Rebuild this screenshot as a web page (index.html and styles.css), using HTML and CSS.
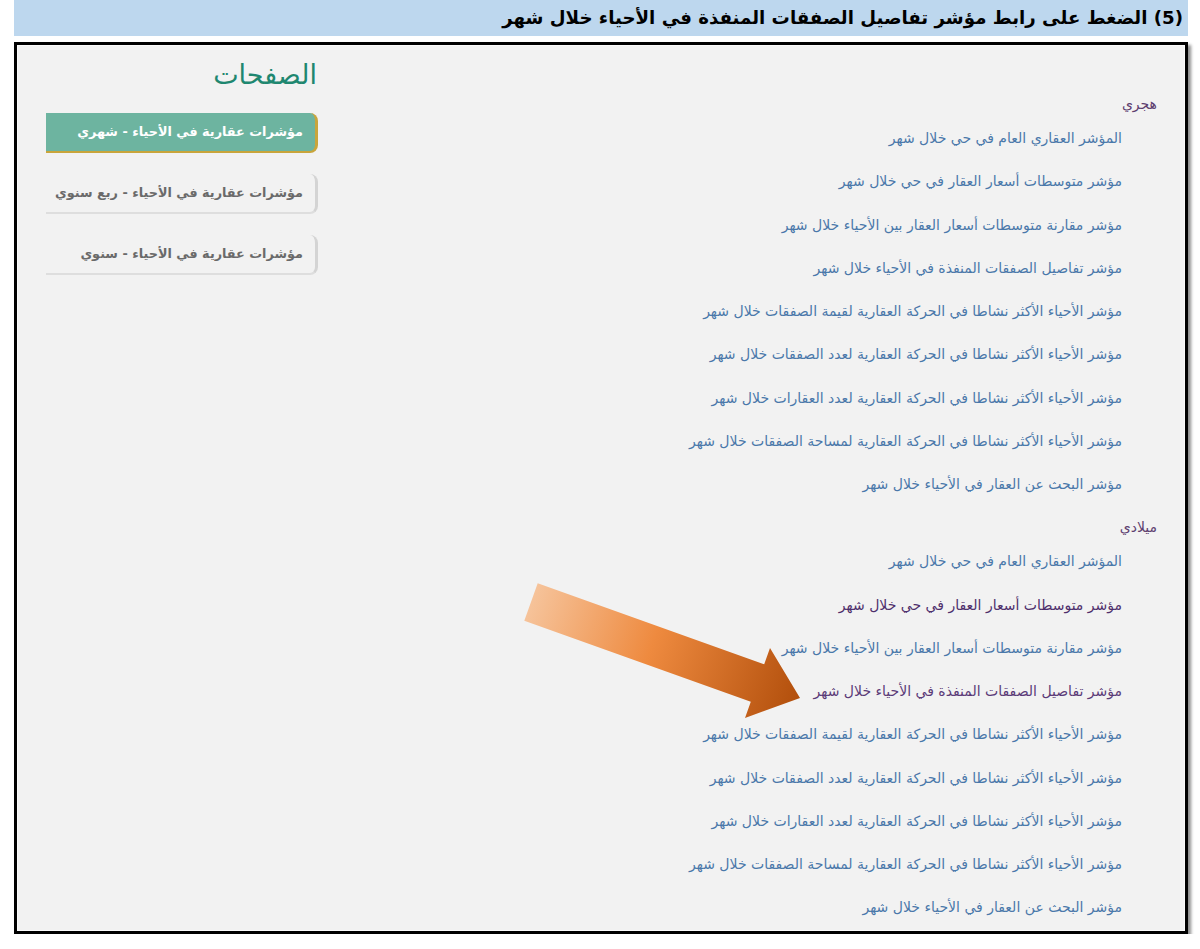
FILE: index.html
```html
<!DOCTYPE html>
<html lang="ar" dir="rtl">
<head>
<meta charset="utf-8">
<title>مؤشرات عقارية</title>
<link rel="stylesheet" href="styles.css">
</head>
<body>
<div class="page">
  <div class="step-title">(5) الضغط على رابط مؤشر تفاصيل الصفقات المنفذة في الأحياء خلال شهر</div>
  <div class="frame">
    <div class="links">
      <div class="group-label">هجري</div>
      <ul class="link-list">
        <li><a href="#">المؤشر العقاري العام في حي خلال شهر</a></li>
        <li><a href="#">مؤشر متوسطات أسعار العقار في حي خلال شهر</a></li>
        <li><a href="#">مؤشر مقارنة متوسطات أسعار العقار بين الأحياء خلال شهر</a></li>
        <li><a href="#">مؤشر تفاصيل الصفقات المنفذة في الأحياء خلال شهر</a></li>
        <li><a href="#">مؤشر الأحياء الأكثر نشاطا في الحركة العقارية لقيمة الصفقات خلال شهر</a></li>
        <li><a href="#">مؤشر الأحياء الأكثر نشاطا في الحركة العقارية لعدد الصفقات خلال شهر</a></li>
        <li><a href="#">مؤشر الأحياء الأكثر نشاطا في الحركة العقارية لعدد العقارات خلال شهر</a></li>
        <li><a href="#">مؤشر الأحياء الأكثر نشاطا في الحركة العقارية لمساحة الصفقات خلال شهر</a></li>
        <li><a href="#">مؤشر البحث عن العقار في الأحياء خلال شهر</a></li>
      </ul>
      <div class="group-label second">ميلادي</div>
      <ul class="link-list">
        <li><a href="#">المؤشر العقاري العام في حي خلال شهر</a></li>
        <li><a href="#" class="visited strong">مؤشر متوسطات أسعار العقار في حي خلال شهر</a></li>
        <li><a href="#">مؤشر مقارنة متوسطات أسعار العقار بين الأحياء خلال شهر</a></li>
        <li><a href="#" class="visited">مؤشر تفاصيل الصفقات المنفذة في الأحياء خلال شهر</a></li>
        <li><a href="#">مؤشر الأحياء الأكثر نشاطا في الحركة العقارية لقيمة الصفقات خلال شهر</a></li>
        <li><a href="#">مؤشر الأحياء الأكثر نشاطا في الحركة العقارية لعدد الصفقات خلال شهر</a></li>
        <li><a href="#">مؤشر الأحياء الأكثر نشاطا في الحركة العقارية لعدد العقارات خلال شهر</a></li>
        <li><a href="#">مؤشر الأحياء الأكثر نشاطا في الحركة العقارية لمساحة الصفقات خلال شهر</a></li>
        <li><a href="#">مؤشر البحث عن العقار في الأحياء خلال شهر</a></li>
      </ul>
    </div>
    <div class="sidebar">
      <h2 class="sidebar-title">الصفحات</h2>
      <a href="#" class="side-btn active">مؤشرات عقارية في الأحياء - شهري</a>
      <a href="#" class="side-btn">مؤشرات عقارية في الأحياء - ربع سنوي</a>
      <a href="#" class="side-btn">مؤشرات عقارية في الأحياء - سنوي</a>
    </div>
    <svg class="arrow" width="1200" height="949" viewBox="0 0 1200 949" aria-hidden="true">
      <defs>
        <linearGradient id="arrowGrad" gradientUnits="userSpaceOnUse" x1="531" y1="602" x2="800" y2="698">
          <stop offset="0" stop-color="#f6c39a"/>
          <stop offset="0.45" stop-color="#ee8a3f"/>
          <stop offset="1" stop-color="#b24f0c"/>
        </linearGradient>
      </defs>
      <polygon points="537.7,583.2 764.2,664.2 770,648 800,698 745,718 750.8,701.8 524.3,620.8" fill="url(#arrowGrad)"/>
    </svg>
  </div>
</div>
</body>
</html>
```
FILE: styles.css
```css
html, body {
  margin: 0;
  padding: 0;
  background: #ffffff;
}
body {
  font-family: "DejaVu Sans", sans-serif;
}
.page {
  width: 1174px;
  margin: 0 12px 0 14px;
  direction: rtl;
}
.step-title {
  height: 36px;
  background: #bdd7ee;
  font-family: "DejaVu Sans", sans-serif;
  font-weight: bold;
  font-size: 18.2px;
  line-height: 36px;
  color: #000;
  padding-right: 5px;
  text-align: right;
}
.frame {
  margin-top: 6px;
  height: 892px;
  box-sizing: border-box;
  border: 3px solid #000;
  background: #f2f2f2;
  box-shadow: 3px 3px 3px rgba(0,0,0,0.45), inset 0 0 0 1px #fafafa;
  display: grid;
  grid-template-columns: 1fr 272px;
  padding-left: 29px;
}
.links {
  padding-top: 47px;
  padding-right: 28px;
}
.group-label {
  font-size: 14px;
  line-height: 24px;
  color: #5e3f70;
}
.group-label.second {
  margin-top: 10px;
}
.link-list {
  list-style: none;
  margin: 0;
  padding: 0 35px 0 0;
}
.link-list li {
  line-height: 43.25px;
  height: 43.25px;
  white-space: nowrap;
}
.link-list a {
  font-size: 14px;
  color: #4a78aa;
  text-decoration: none;
}
.link-list a.visited {
  color: #5b3b78;
}
.link-list a.strong {
  color: #4e2f6c;
}
.sidebar {
  padding-top: 13px;
  display: flex;
  flex-direction: column;
  gap: 21px;
}
.sidebar-title {
  margin: 0;
  font-size: 27px;
  font-weight: normal;
  line-height: 34px;
  color: #1f8770;
  padding-right: 1px;
}
.side-btn {
  display: block;
  height: 40px;
  box-sizing: border-box;
  line-height: 38px;
  padding-right: 12px;
  font-size: 12.8px;
  font-weight: bold;
  text-decoration: none;
  color: #6a6a6a;
  border-right: 3px solid #d4d4d4;
  border-bottom: 2px solid #dedede;
  border-top-right-radius: 8px;
  border-bottom-right-radius: 8px;
  white-space: nowrap;
}
.side-btn.active {
  background: #6db4a0;
  color: #ffffff;
  border-right-color: #c9a53b;
  border-bottom-color: #c9a53b;
}
.arrow {
  position: absolute;
  left: 0;
  top: 0;
  pointer-events: none;
}
```
